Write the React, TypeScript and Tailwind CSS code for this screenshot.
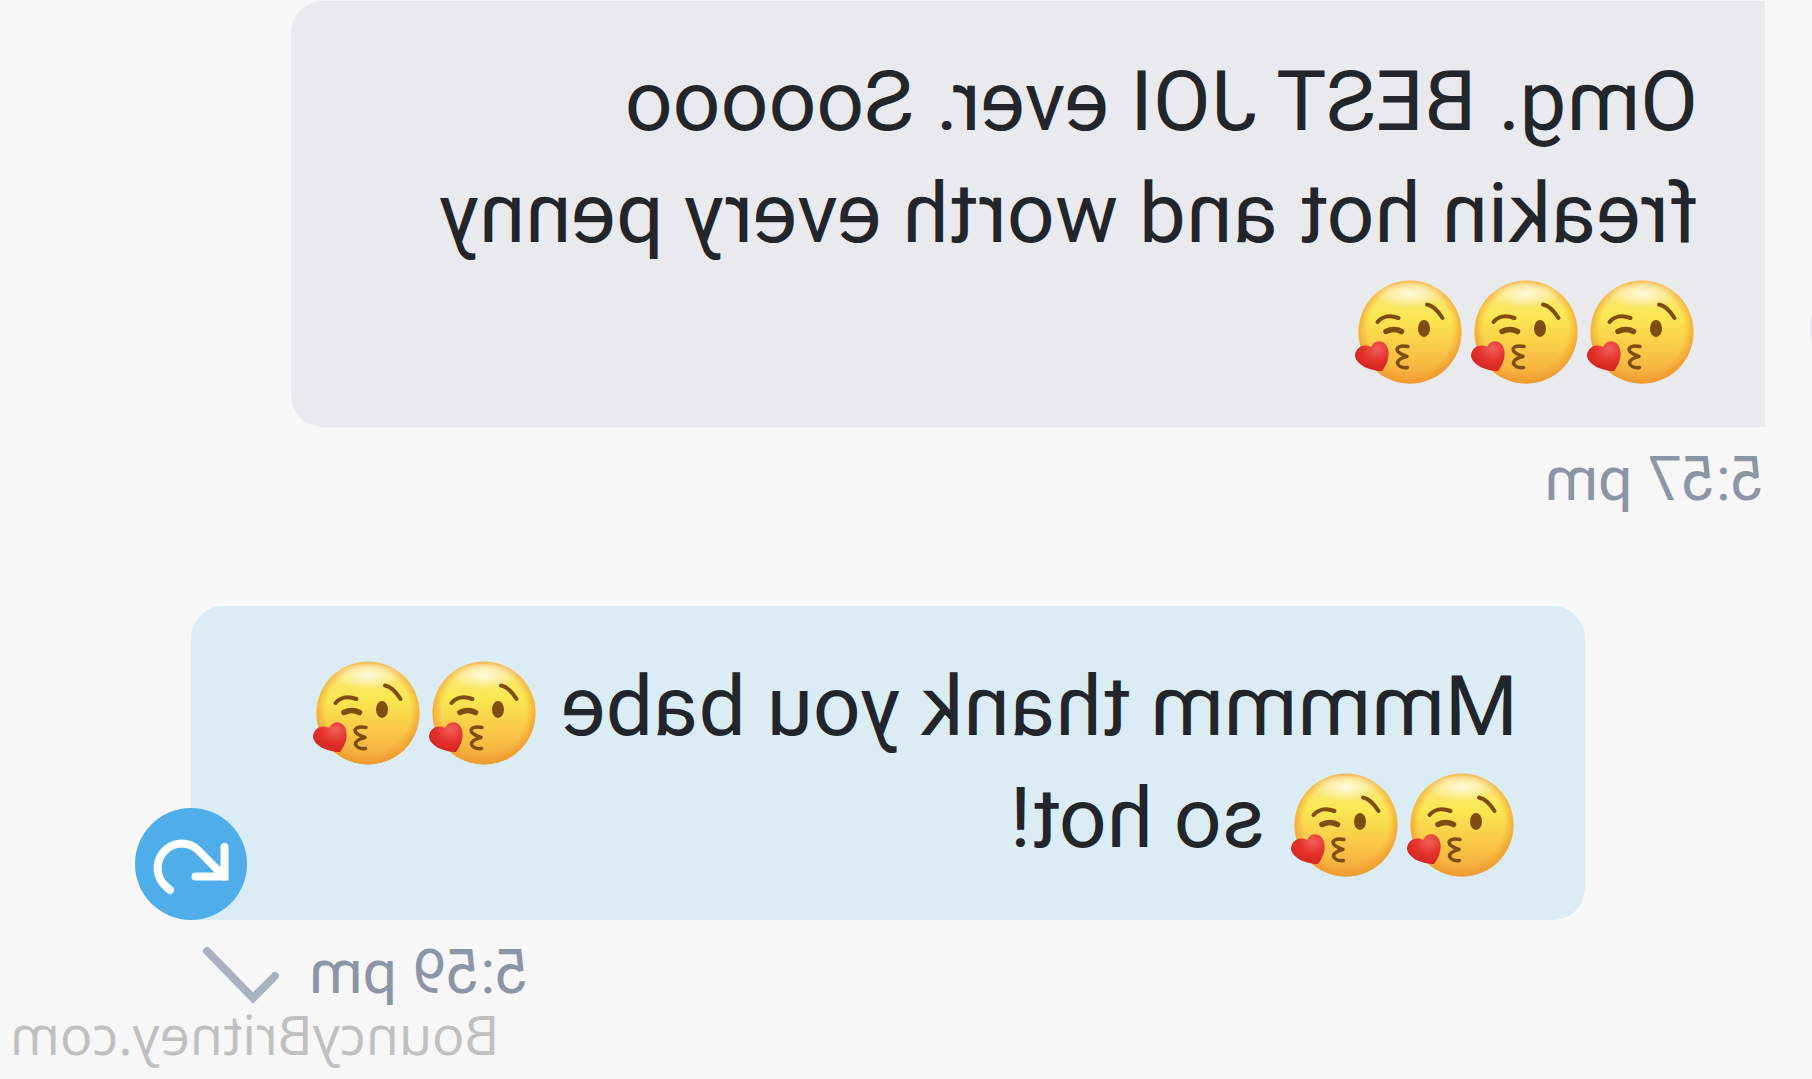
import React from 'react';

interface IMessageProps {
  children: React.ReactNode;
}

// ----------------------------------------------------------------

const KissEmoji: React.FC = () => (
  <svg
    role="img"
    aria-label="Face blowing a kiss"
    viewBox="-3 0 116 112"
    className="inline-block h-28 w-29 overflow-visible align-top"
  >
    <defs>
      <linearGradient id="kiss-face" x1="0" y1="0" x2="0" y2="1">
        <stop offset="0" stopColor="#fbe58a" />
        <stop offset="0.35" stopColor="#fbe852" />
        <stop offset="0.65" stopColor="#facb48" />
        <stop offset="1" stopColor="#f3a53a" />
      </linearGradient>
      <radialGradient id="kiss-edge" cx="0.5" cy="0.48" r="0.52">
        <stop offset="0.78" stopColor="#f2a033" stopOpacity="0" />
        <stop offset="1" stopColor="#ee982c" stopOpacity="0.85" />
      </radialGradient>
      <radialGradient id="kiss-shine" cx="0.5" cy="0.4" r="0.5">
        <stop offset="0" stopColor="#fffbe8" stopOpacity="0.9" />
        <stop offset="1" stopColor="#fffbe8" stopOpacity="0" />
      </radialGradient>
      <radialGradient id="kiss-heart" cx="0.35" cy="0.25" r="0.8">
        <stop offset="0" stopColor="#f2605a" />
        <stop offset="0.5" stopColor="#e5332d" />
        <stop offset="1" stopColor="#d0241f" />
      </radialGradient>
    </defs>
    <circle cx="53" cy="62" r="51.5" fill="url(#kiss-face)" />
    <circle cx="53" cy="62" r="51.5" fill="url(#kiss-edge)" />
    <ellipse cx="53" cy="27" rx="34" ry="14" fill="url(#kiss-shine)" />
    <g fill="none" stroke="#7f4d12" strokeLinecap="round">
      <path d="M36 34.5Q28 36 20.5 48" strokeWidth="4" />
      <path d="M85.5 52Q78 43 64.5 48" strokeWidth="4" />
      <path d="M77 61.5Q69 57.5 61.5 61.5" strokeWidth="5.5" />
      <path
        d="M55 76.5Q64 75 66 79Q66 83 56 86.5Q66 89 65.5 93.5Q63 98.5 55.5 97.5"
        strokeWidth="3.5"
        strokeLinejoin="round"
      />
    </g>
    <ellipse cx="39" cy="58.5" rx="6" ry="8.5" fill="#7f4d12" />
    <path
      d="M81 101C76 95 73 86 75 79C77 70 88 68 92 77C100 73 107 78 108 85C108 94 94 101 81 101Z"
      fill="url(#kiss-heart)"
    />
  </svg>
);

const MessageText: React.FC<IMessageProps> = ({ children }) => (
  <p className="text-[84px] leading-[112px] text-[#22252a]">{children}</p>
);

const RetryIcon: React.FC = () => (
  <svg
    viewBox="0 0 112 112"
    fill="none"
    stroke="#fff"
    strokeWidth="8"
    strokeLinecap="round"
    className="size-28"
  >
    <path d="M77 82L83 76.5A24.5 24.5 0 0 0 65.5 35.5A24.5 24.5 0 0 0 48.5 42.5L23 68.5" />
    <path d="M22.5 39V68.5H51.5" />
  </svg>
);

const CheckIcon: React.FC = () => (
  <svg
    viewBox="0 0 76 72"
    fill="none"
    stroke="#a9b2bf"
    strokeWidth="8"
    strokeLinecap="round"
    className="h-18 w-19"
  >
    <path d="M4 40L26 62L72 15" />
  </svg>
);

const App: React.FC = () => {
  return (
    <main className="relative min-h-screen -scale-x-100 overflow-hidden bg-[#f7f7f7] pt-px font-['Roboto',sans-serif]">
      {/* sender avatar, only its edge is in view */}
      <span className="absolute top-68 -left-[110px] size-28 rounded-full bg-[#e6e7ea]" />

      <article className="mr-[291px] ml-[47px]">
        <div className="rounded-r-4xl bg-[#e9eaee] px-[67px] py-[45px]">
          <MessageText>
            Omg. BEST JOI ever. Sooooo freakin hot and worth every penny{' '}
            <KissEmoji />
            <KissEmoji />
            <KissEmoji />
          </MessageText>
        </div>
        <time className="mt-4 block text-[61px] leading-[72px] text-[#8c95a5]">
          5:57 pm
        </time>
      </article>

      <article className="mt-[91px] mr-[191px] ml-[227px]">
        <div className="relative rounded-4xl rounded-br-none bg-[#dcecf5] px-[67px] py-[45px]">
          <MessageText>
            Mmmmm thank you babe <KissEmoji />
            <KissEmoji />
            <KissEmoji />
            <KissEmoji /> so hot!
          </MessageText>
          <button
            type="button"
            aria-label="Resend"
            className="absolute right-0 bottom-0 translate-x-1/2 rounded-full bg-[#4fadea]"
          >
            <RetryIcon />
          </button>
        </div>
        <div className="mt-4 mr-3 flex items-center justify-end gap-[30px]">
          <time className="text-[61px] leading-[72px] text-[#8c95a5]">
            5:59 pm
          </time>
          <CheckIcon />
        </div>
      </article>

      <footer className="mr-[10px] text-right font-['Open_Sans',sans-serif] text-[54px] leading-[52px] text-[#c0c0c0]">
        BouncyBritney.com
      </footer>
    </main>
  );
};

export default App;
